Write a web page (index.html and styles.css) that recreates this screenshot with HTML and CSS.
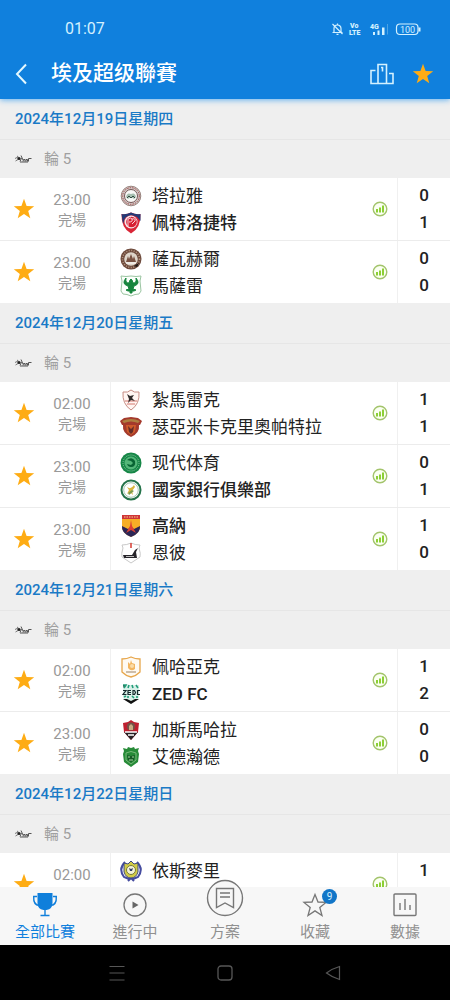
FILE: index.html
```html
<!DOCTYPE html>
<html lang="zh-Hant">
<head>
<meta charset="utf-8">
<meta name="viewport" content="width=device-width, initial-scale=1">
<title>埃及超级聯賽</title>
<link rel="stylesheet" href="styles.css">
</head>
<body>
<svg class="sprite" aria-hidden="true">
  <symbol id="star" viewBox="0 0 22 22"><path fill="#feac14" d="M11 .8l2.6 7.1 7.6.3-6 4.7 2.1 7.3L11 16l-6.300 4.200 2.100-7.300-6-4.700 7.600-.3z"/></symbol>
  <symbol id="stats" viewBox="0 0 16 16"><circle cx="8" cy="8" r="6.800" fill="#fbfff2" stroke="#a3c46c" stroke-width="1.400"/><path fill="#8ccf35" d="M4 8h2v3.600H4zM7 6.400h2v5.200H7zM10 4.500h2v7.100h-2z"/></symbol>
  <symbol id="league" viewBox="0 0 17 10"><path d="M0 4.500l3-1.500M.5 7L3 5.500M2 2l1.500 1" stroke="#777" fill="none"/><circle cx="4" cy="4.500" r="1.600" fill="#222"/><path d="M5 7.500L6.500 4M6 1.500L8 6M8 7.500l.5-2h1.500v2M11 7.500v-2h1.500v2M13.500 7.500v-3h3M5 8h8" fill="none" stroke="#555"/></symbol>
</svg>
<div class="app">
  <header class="top">
    <div class="status">
      <time class="clock">01:07</time>
      <svg class="status-icons" viewBox="0 0 92 16" role="img" aria-label="靜音 VoLTE 4G 電量 100">
        <g fill="none" stroke="#d4f1ff" stroke-width="1.200">
          <path d="M2.500 11.500h10M4 11V7.500a3.500 3.500 0 0 1 7 0V11l1 .5M7.500 2.500v1M6.500 13.300h2M2.500 3l10 10"/>
          <rect x="66.500" y="3" width="21.500" height="10.500" rx="3.500"/>
        </g>
        <path fill="#d4f1ff" d="M43 11h2v3h-2zM47.500 9.500h2v4.500h-2zM52 6.500h2.500V14H52zM88.500 6.500h2v4h-2z"/>
        <path d="M57.500 3v10.500" stroke="#4ba3e6"/>
        <text class="tiny-bold" x="20" y="7">Vo</text>
        <text class="tiny-bold" x="19" y="14">LTE</text>
        <text class="tiny-bold" x="40" y="8">4G</text>
        <text class="tiny" x="70" y="12">100</text>
      </svg>
    </div>
    <div class="bar">
      <button class="icon-btn" aria-label="返回"><svg width="14" height="22" viewBox="0 0 14 22"><path d="M12 1.500L3 11l9 9.500" fill="none" stroke="#e4f8ff" stroke-width="2"/></svg></button>
      <h1 class="title">埃及超级聯賽</h1>
      <button class="icon-btn" aria-label="排名"><svg width="24" height="22" viewBox="0 0 24 22"><g fill="none" stroke="#d4f1ff" stroke-width="1.600"><path d="M8 20.500V1.500h8.500v19M5.500 7.500H1v13h22v-10h-4"/><path d="M11 4.500h1.500v4"/></g></svg></button>
      <button class="icon-btn" aria-label="已收藏"><svg width="22" height="22"><use href="#star"/></svg></button>
    </div>
  </header>

  <main class="list">
    <section>
      <h2 class="date">2024年12月19日星期四</h2>
      <h3 class="round"><svg width="17" height="10"><use href="#league"/></svg>輪 5</h3>
      <article class="match">
        <button class="fav" aria-label="收藏"><svg width="22" height="22"><use href="#star"/></svg></button>
        <div class="when"><time>23:00</time><span>完場</span></div>
        <div class="teams">
          <div class="team"><svg width="22" height="22" viewBox="0 0 22 22"><circle cx="11" cy="11" r="9.800" fill="#cfcac8" stroke="#99837e"/><circle cx="11" cy="11" r="8.300" fill="none" stroke="#a64545" stroke-dasharray="1.500 1"/><circle cx="11" cy="11" r="6.500" fill="#f8f8f6" stroke="#755"/><path d="M6 12q1-5 5-3 4-2 5 3l-2 2-3-2-3 2z" fill="#a6bfb0"/><path d="M7 13l2-2 2 2 2-2 2 2" fill="none" stroke="#344b42"/></svg>塔拉雅</div>
          <div class="team win"><svg width="22" height="22" viewBox="0 0 22 22"><path d="M1.500 2Q6 3 11 .5 16 3 20.500 2 21 16 11 21.500 1 16 1.500 2z" fill="#d92637"/><path d="M1.500 2Q6 3 11 .5 16 3 20.500 2v7L17 5Q10 1 5 6l-2 6z" fill="#233a76"/><circle cx="11" cy="10" r="6.500" fill="#f4e9ee"/><circle cx="11.500" cy="10" r="5.300" fill="#d81e32"/><path d="M8 14V7q3-2 4 0 1 3-3 3M12 7q4-1 3 2l-3 3" fill="none" stroke="#fff" stroke-width=".8"/></svg>佩特洛捷特</div>
        </div>
        <svg class="stats" width="16" height="16"><use href="#stats"/></svg>
        <div class="score"><span>0</span><span>1</span></div>
      </article>
      <article class="match">
        <button class="fav" aria-label="收藏"><svg width="22" height="22"><use href="#star"/></svg></button>
        <div class="when"><time>23:00</time><span>完場</span></div>
        <div class="teams">
          <div class="team"><svg width="22" height="22" viewBox="0 0 22 22"><circle cx="11" cy="11" r="10.500" fill="#6e4b3d"/><circle cx="11" cy="11" r="8.500" fill="none" stroke="#b99a87" stroke-width="1.500" stroke-dasharray="1 1.500"/><circle cx="11" cy="11" r="6.800" fill="#ded5ca"/><path d="M6 14l2-6 1 3 2-5 2 5 1-3 2 6z" fill="#795243"/><path d="M6 15h10" stroke="#fff"/><path d="M14 18l5-3-2 4z" fill="#181514"/></svg>薩瓦赫爾</div>
          <div class="team"><svg width="22" height="22" viewBox="0 0 22 22"><path d="M1 1q5 1 10 0 5 1 10 0l-1 5 1 10-2 3q-4 0-8 2-4-2-8-2l-2-3 1-10z" fill="#fbfffb" stroke="#9bc5a2"/><path d="M6 3q-5 6 2 8l1 3-3 1 2 1h2v2h2v-2h2l2-1-3-1 1-3q7-2 2-8 1 5-3 5l-1-3-1-1-1 1-1 3Q5 8 6 3z" fill="#16853d" stroke="#16853d"/></svg>馬薩雷</div>
        </div>
        <svg class="stats" width="16" height="16"><use href="#stats"/></svg>
        <div class="score"><span>0</span><span>0</span></div>
      </article>
    </section>

    <section>
      <h2 class="date">2024年12月20日星期五</h2>
      <h3 class="round"><svg width="17" height="10"><use href="#league"/></svg>輪 5</h3>
      <article class="match">
        <button class="fav" aria-label="收藏"><svg width="22" height="22"><use href="#star"/></svg></button>
        <div class="when"><time>02:00</time><span>完場</span></div>
        <div class="teams">
          <div class="team"><svg width="22" height="22" viewBox="0 0 22 22"><path d="M3 3q5 1 8-2 3 3 8 2 1 12-8 18Q2 15 3 3z" fill="#fff5f2" stroke="#c68c83"/><path d="M5 12h12M7 15h8" stroke="#d5796e" stroke-width="1.200"/><path d="M7 5l3 2 4-1-2 3 3 3-4-1-3 3 1-4z" fill="#302b2a"/></svg>紮馬雷克</div>
          <div class="team"><svg width="22" height="22" viewBox="0 0 22 22"><path d="M0 5l4-3 7-1 7 1 4 3-2 4h-1q1 8-8 12Q2 17 3 9H2z" fill="#a43a2c"/><path d="M2 5q9-4 18 0l-2 2q-7-3-14 0z" fill="#ad8040"/><path d="M6 9h10l-1 7-4 3-4-3z" fill="#cf5b2b"/><path d="M8 10l3 3 3-3-1 6-2 2-2-2z" fill="#632c28"/></svg>瑟亞米卡克里奧帕特拉</div>
        </div>
        <svg class="stats" width="16" height="16"><use href="#stats"/></svg>
        <div class="score"><span>1</span><span>1</span></div>
      </article>
      <article class="match">
        <button class="fav" aria-label="收藏"><svg width="22" height="22"><use href="#star"/></svg></button>
        <div class="when"><time>23:00</time><span>完場</span></div>
        <div class="teams">
          <div class="team"><svg width="22" height="22" viewBox="0 0 22 22"><circle cx="11" cy="11" r="10.500" fill="#168747"/><circle cx="11" cy="11" r="8" fill="none" stroke="#8fc8a5" stroke-dasharray="1 1"/><circle cx="11" cy="11" r="6.500" fill="#54b779"/><path d="M7 8q5-4 8 1 1 6-4 6-3 0-4-3l4 1 2-2-2-2z" fill="#086433"/></svg>现代体育</div>
          <div class="team win"><svg width="22" height="22" viewBox="0 0 22 22"><circle cx="11" cy="11" r="9.500" fill="#fff" stroke="#24734a" stroke-width="2"/><circle cx="11" cy="11" r="7.300" fill="none" stroke="#8ab69a" stroke-width=".8"/><path d="M7 8q4 3 7-2l1 2-3 4 1 4-3-3-3 2 2-4z" fill="#d7b53d"/><path d="M8 14l4-3 2 1-5 4z" fill="#7b9b4d"/></svg>國家銀行俱樂部</div>
        </div>
        <svg class="stats" width="16" height="16"><use href="#stats"/></svg>
        <div class="score"><span>0</span><span>1</span></div>
      </article>
      <article class="match">
        <button class="fav" aria-label="收藏"><svg width="22" height="22"><use href="#star"/></svg></button>
        <div class="when"><time>23:00</time><span>完場</span></div>
        <div class="teams">
          <div class="team win"><svg width="22" height="22" viewBox="0 0 22 22"><path d="M2 0h18v12q0 6-9 10-9-4-9-10z" fill="#f6ae27"/><path d="M2 0h18v4H2z" fill="#cf3438"/><path d="M4 2h14" stroke="#f4cf91" stroke-dasharray="1.500 1"/><path d="M2 11l6 3 3-2 3 2 6-3q1 7-9 11Q1 18 2 11z" fill="#2b2556"/><path d="M11 5l1 6 4 7-5-3-5 3 4-7z" fill="#dc4034"/></svg>高納</div>
          <div class="team"><svg width="22" height="22" viewBox="0 0 22 22"><path d="M2 3q5 0 9-2 4 2 9 2l-1 3q2 6 1 9l-9 6-9-6q-1-3 1-9z" fill="#fff" stroke="#c9c9c9"/><path d="M11 1v5" stroke="#d6392f" stroke-width="1.500"/><path d="M3 13h9l3-5 3-2-2 4 1 6H4z" fill="#26242a"/><path d="M6 14.500h8" stroke="#bbb"/></svg>恩彼</div>
        </div>
        <svg class="stats" width="16" height="16"><use href="#stats"/></svg>
        <div class="score"><span>1</span><span>0</span></div>
      </article>
    </section>

    <section>
      <h2 class="date">2024年12月21日星期六</h2>
      <h3 class="round"><svg width="17" height="10"><use href="#league"/></svg>輪 5</h3>
      <article class="match">
        <button class="fav" aria-label="收藏"><svg width="22" height="22"><use href="#star"/></svg></button>
        <div class="when"><time>02:00</time><span>完場</span></div>
        <div class="teams">
          <div class="team"><svg width="22" height="22" viewBox="0 0 22 22"><path d="M2 3q5 0 9-2 4 2 9 2v13q-4 4-9 5-5-1-9-5z" fill="#fffaf2" stroke="#e7a64b" stroke-width="1.300"/><path d="M8 6l2 2 1-4 1 3 3 1v5q-4 3-7-1z" fill="#f3b560"/><circle cx="12" cy="10" r="2" fill="#fbdca8"/><path d="M6 16h10" stroke="#9b8165"/></svg>佩哈亞克</div>
          <div class="team win"><svg width="22" height="22" viewBox="0 0 22 22"><path d="M3 2h16v13l-8 6-8-6z" fill="#d9f0e9"/><path d="M3 2h3L4 5M9 2L8 5M12 2l1 3M16 2l2 3M4 14l2-1M8 13v2M12 13l2 2M17 13v2" stroke="#239d79" stroke-width="1.600"/><path d="M3 16h4l4 2 4-2h4l-8 5z" fill="#111"/><path d="M3 7.500h3l-3 4h3.500M11 7.500H8v4h3M8 9.500h3M13 7.500v4h1.500l1-2-1-2zM20 7.500h-2.500v4H20" fill="none" stroke="#15282b" stroke-width="1.200"/></svg>ZED FC</div>
        </div>
        <svg class="stats" width="16" height="16"><use href="#stats"/></svg>
        <div class="score"><span>1</span><span>2</span></div>
      </article>
      <article class="match">
        <button class="fav" aria-label="收藏"><svg width="22" height="22"><use href="#star"/></svg></button>
        <div class="when"><time>23:00</time><span>完場</span></div>
        <div class="teams">
          <div class="team"><svg width="22" height="22" viewBox="0 0 22 22"><path d="M3 4l5-1 3-2 3 2 5 1-1 9-7 8-7-8z" fill="#bf2030"/><path d="M4 13h14l-7 8z" fill="#272326"/><circle cx="11" cy="7.500" r="4" fill="#735247"/><path d="M9 7l2-2 2 2v4H9z" fill="#c8aa83"/><path d="M5 13h12M8 16h6" stroke="#fff" stroke-width="1.300"/></svg>加斯馬哈拉</div>
          <div class="team"><svg width="22" height="22" viewBox="0 0 22 22"><path d="M4 5L3 2l4 1 1-2 3 1 3-1 1 2 4-1-1 3 1 3-1 8-7 5-7-5-1-8z" fill="#278b38"/><path d="M6 7q5-3 10 0v7l-5 4-5-4z" fill="none" stroke="#79b97a"/><path d="M7 9l4 1 4-1-1 5-3 2-3-2z" fill="#155a25"/><path d="M8 11h2M12 11h2M9 14h4" stroke="#a9d9a4"/></svg>艾德瀚德</div>
        </div>
        <svg class="stats" width="16" height="16"><use href="#stats"/></svg>
        <div class="score"><span>0</span><span>0</span></div>
      </article>
    </section>

    <section>
      <h2 class="date">2024年12月22日星期日</h2>
      <h3 class="round"><svg width="17" height="10"><use href="#league"/></svg>輪 5</h3>
      <article class="match">
        <button class="fav" aria-label="收藏"><svg width="22" height="22"><use href="#star"/></svg></button>
        <div class="when"><time>02:00</time></div>
        <div class="teams">
          <div class="team"><svg width="22" height="22" viewBox="0 0 22 22"><path d="M5 2Q-2 9 4 17l5 2M17 2q7 7 1 15l-5 2M8 21l3-3 3 3" fill="none" stroke="#454ca0" stroke-width="2"/><path d="M4 3l4 1 3-3 3 3 4-1v9q-2 6-7 6t-7-6z" fill="#d2cc45" stroke="#3b4680"/><circle cx="11" cy="10" r="4.500" fill="#f3f2d7" stroke="#777b36"/><path d="M9 8l2 1 2-1-1 3h-2z" fill="#333c65"/></svg>依斯麥里</div>
          <div class="team"><svg width="22" height="22" viewBox="0 0 22 22"><circle cx="11" cy="11" r="9.500" fill="#ddd" stroke="#444b58" stroke-width="2"/></svg></div>
        </div>
        <svg class="stats" width="16" height="16"><use href="#stats"/></svg>
        <div class="score"><span>1</span></div>
      </article>
    </section>
  </main>

  <nav class="tabs">
    <a class="tab active" href="#all"><svg width="26" height="26" viewBox="0 0 26 26"><path fill="#0f7fdb" d="M5.500 1h15v10q0 6-6 7h-3q-6-1-6-7z"/><path d="M5 4.500H1.700q-.5 8.500 5.500 9M21 4.500h3.300q.5 8.500-5.500 9M13 17v6M8.500 23.500h9" fill="none" stroke="#0f7fdb" stroke-width="1.400"/></svg>全部比賽</a>
    <a class="tab" href="#live"><svg width="26" height="26" viewBox="0 0 26 26"><circle cx="13" cy="13" r="11" fill="none" stroke="#777" stroke-width="1.300"/><path d="M10.500 9.500l6 3.500-6 3.500z" fill="#666"/></svg>進行中</a>
    <a class="tab plan" href="#plans"><svg width="38" height="38" viewBox="0 0 38 38"><circle cx="19" cy="19" r="17.500" fill="#f7f7f7" stroke="#777" stroke-width="1.400"/><path d="M10.500 9.500h17v19L19 24l-8.500 4.500zM14 14h10M14 18h10" fill="none" stroke="#777" stroke-width="1.400"/></svg>方案</a>
    <a class="tab" href="#favorites"><svg width="26" height="26" viewBox="0 0 26 26"><path d="M13 2.500l3 7.500 8 .4-6.200 5 2.200 8.100-7-4.600-7 4.600 2.200-8.100-6.200-5 8-.4z" fill="none" stroke="#777" stroke-width="1.300"/></svg>收藏<span class="badge">9</span></a>
    <a class="tab" href="#data"><svg width="26" height="26" viewBox="0 0 26 26"><rect x="2" y="2" width="22" height="21.500" rx="1" fill="none" stroke="#777" stroke-width="1.400"/><path d="M8 11v7M13 7v11M18 13v5" stroke="#777" stroke-width="1.400"/></svg>數據</a>
  </nav>

  <div class="system">
    <button aria-label="選單"><svg width="18" height="18" viewBox="0 0 18 18"><path d="M1.500 2.500h15M1.500 9h15M1.500 16h15" stroke="#575757" stroke-width="1.200"/></svg></button>
    <button aria-label="主畫面"><svg width="18" height="18" viewBox="0 0 18 18"><rect x="2" y="2" width="14" height="14" rx="3" fill="none" stroke="#575757" stroke-width="1.300"/></svg></button>
    <button aria-label="返回"><svg width="18" height="18" viewBox="0 0 18 18"><path d="M15.500 2.500v13q-7-2-13-6.500 6-4.500 13-6.500z" fill="none" stroke="#575757" stroke-width="1.200"/></svg></button>
  </div>
</div>
</body>
</html>
```

FILE: styles.css
```css
* { box-sizing: border-box; }

body {
  margin: 0;
  font-family: Roboto, "Noto Sans CJK TC", sans-serif;
  color: #222;
  background: #fff;
}

h1, h2, h3 { margin: 0; }
svg { display: block; flex: none; }
button { padding: 0; border: 0; background: none; color: inherit; font: inherit; cursor: pointer; }
.sprite { position: absolute; width: 0; height: 0; }

.app { display: flex; flex-direction: column; height: 100vh; }

.top {
  position: relative;
  z-index: 1;
  flex: none;
  color: #fff;
  background: #1080dd;
  box-shadow: 0 1px 6px #60b0f0;
}
.status {
  display: flex;
  align-items: center;
  justify-content: space-between;
  padding: 19px 26px 9px 65px;
}
.clock { font-size: 16px; line-height: 20px; color: #d4f1ff; }
.status-icons { width: 92px; height: 16px; margin-right: 2px; }
.tiny, .tiny-bold { fill: #d4f1ff; font-family: Roboto, sans-serif; }
.tiny { font-size: 9px; }
.tiny-bold { font-size: 7px; font-weight: 900; }
.bar { display: flex; align-items: center; padding: 9px 16px 9px 14px; }
.title { flex: 1; margin-left: 23px; font-size: 21px; line-height: 33px; font-weight: 500; }
.icon-btn + .icon-btn { margin-left: 18px; }

.list { flex: 1; min-height: 0; overflow: hidden; }
.date {
  padding: 1px 15px 0;
  font-size: 15px;
  line-height: 39px;
  font-weight: 500;
  color: #1a7ac6;
  background: #efefef;
  border-bottom: 1px solid #e6e6e6;
}
.round {
  display: flex;
  align-items: center;
  gap: 12px;
  padding: 0 15px;
  font-size: 15px;
  line-height: 38px;
  font-weight: 400;
  color: #a0a0a0;
  background: #efefef;
}

.match { display: flex; align-items: stretch; height: 62px; background: #fff; }
.match + .match { height: 63px; border-top: 1px solid #ececec; }
.fav { display: flex; align-items: center; justify-content: center; width: 48px; }
.when {
  display: flex;
  flex-direction: column;
  width: 63px;
  padding: 12px 14px 0 0;
  border-right: 1px solid #f0f0f0;
  text-align: center;
  color: #999;
  font-size: 14px;
  line-height: 20px;
}
.when time { font-size: 15px; }
.teams { flex: 1; min-width: 0; padding: 4px 0 0 9px; }
.team {
  display: flex;
  align-items: center;
  gap: 10px;
  height: 27px;
  font-size: 17px;
  line-height: 24px;
  white-space: nowrap;
}
.win { font-weight: 500; }
.stats { align-self: center; margin-right: 9px; }
.score {
  width: 53px;
  padding-top: 4px;
  border-left: 1px solid #f0f0f0;
  text-align: center;
  font-size: 17px;
  line-height: 27px;
  font-weight: 500;
}
.score span { display: block; }

.tabs { position: relative; display: flex; flex: none; height: 58px; background: #f7f7f7; }
.tab {
  position: relative;
  display: flex;
  flex: 1;
  flex-direction: column;
  align-items: center;
  justify-content: flex-end;
  gap: 3px;
  padding-bottom: 2px;
  font-size: 15px;
  line-height: 22px;
  color: #909090;
  text-decoration: none;
}
.active { color: #1080dd; }
.plan { gap: 4px; }
.badge {
  position: absolute;
  top: 2px;
  left: calc(50% + 7px);
  width: 15px;
  height: 15px;
  border-radius: 8px;
  background: #1276c8;
  color: #d4f1ff;
  font-size: 10px;
  line-height: 15px;
  text-align: center;
}

.system {
  display: flex;
  flex: none;
  align-items: center;
  justify-content: center;
  gap: 90px;
  height: 55px;
  background: #000;
}
```
